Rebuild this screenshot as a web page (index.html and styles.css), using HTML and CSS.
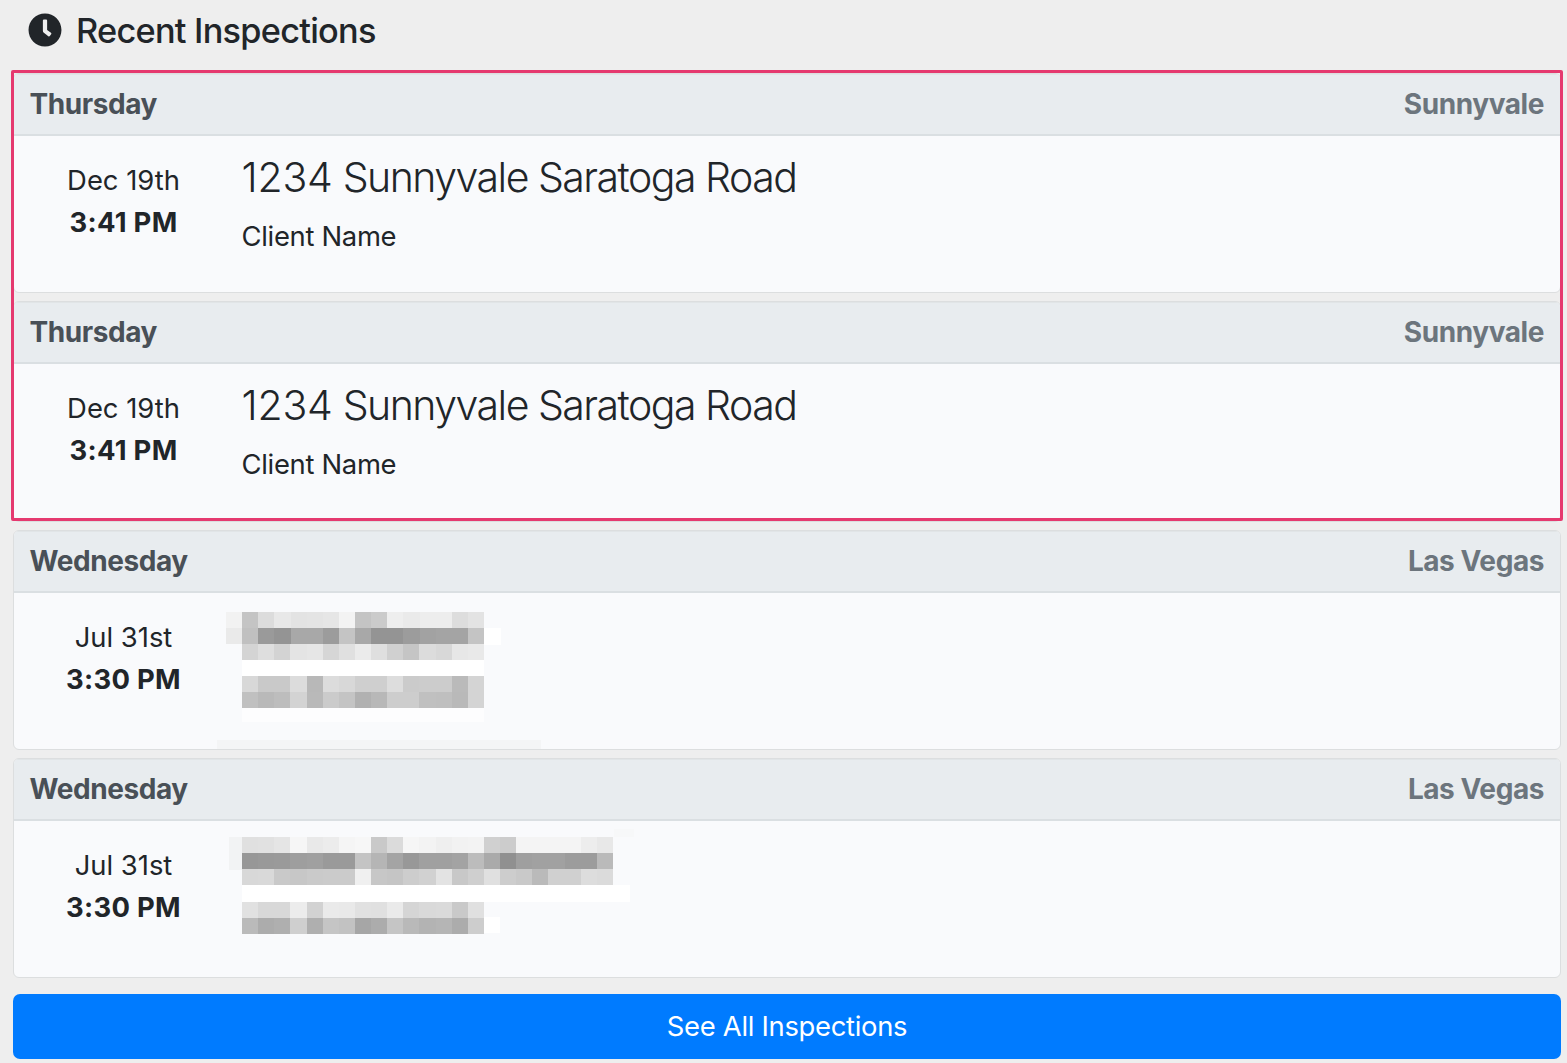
FILE: index.html
```html
<!DOCTYPE html>
<html lang="en">
<head>
<meta charset="utf-8">
<title>Recent Inspections</title>
<link rel="stylesheet" href="styles.css">
</head>
<body>
<main class="panel">
  <h1 class="heading">
    <svg class="clock" viewBox="0 0 512 512" aria-hidden="true"><path fill="currentColor" d="M256 8C119 8 8 119 8 256s111 248 248 248 248-111 248-248S393 8 256 8zm92.5 313l-20 25a16 16 0 0 1-22.500 2.500l-67-49.700a40 40 0 0 1-15-31.200V112a16 16 0 0 1 16-16h32a16 16 0 0 1 16 16v144l58 42.500a16 16 0 0 1 2.500 22.500z"/></svg>
    <span class="heading-text">Recent Inspections</span>
  </h1>
  <section class="highlighted">
    <article class="card">
      <header class="card-header"><span class="day">Thursday</span><span class="city">Sunnyvale</span></header>
      <div class="card-body">
        <div class="when"><span class="date">Dec 19th</span><b class="time">3:41 PM</b></div>
        <div class="info"><h2 class="address"><span class="number">1234</span> Sunnyvale Saratoga Road</h2><p class="client">Client Name</p></div>
      </div>
    </article>
    <article class="card">
      <header class="card-header"><span class="day">Thursday</span><span class="city">Sunnyvale</span></header>
      <div class="card-body">
        <div class="when"><span class="date">Dec 19th</span><b class="time">3:41 PM</b></div>
        <div class="info"><h2 class="address"><span class="number">1234</span> Sunnyvale Saratoga Road</h2><p class="client">Client Name</p></div>
      </div>
    </article>
  </section>
  <article class="card">
    <header class="card-header"><span class="day">Wednesday</span><span class="city">Las Vegas</span></header>
    <div class="card-body">
      <div class="when"><span class="date">Jul 31st</span><b class="time">3:30 PM</b></div>
      <svg class="redacted" data-mosaic="short" width="340" height="157" aria-hidden="true"></svg>
    </div>
  </article>
  <article class="card">
    <header class="card-header"><span class="day">Wednesday</span><span class="city">Las Vegas</span></header>
    <div class="card-body">
      <div class="when"><span class="date">Jul 31st</span><b class="time">3:30 PM</b></div>
      <svg class="redacted" data-mosaic="long" width="430" height="157" aria-hidden="true"></svg>
    </div>
  </article>
  <a class="see-all"><span>See All Inspections</span></a>
</main>
<script src="mosaic.js"></script>
</body>
</html>
```

FILE: styles.css
```css
* { box-sizing: border-box; }
body {
  margin: 0;
  background: #eee;
  color: #212529;
  font: 400 27.4px/42px Inter, "Liberation Sans", sans-serif;
}
h1, h2, p { margin: 0; }
.panel { padding: 0 6px 0 13px; }
.heading {
  display: flex;
  align-items: center;
  height: 73px;
  padding: 0 0 13px 15px;
  gap: 14px;
  font-size: 34.3px;
  font-weight: 500;
  line-height: 42px;
}
.heading-text { padding-top: 2px; letter-spacing: -0.74px; }
.clock { width: 34px; height: 34px; }
.highlighted { position: relative; }
.highlighted::after {
  content: "";
  position: absolute;
  inset: -3px -2px 1px;
  border: 3px solid #e5396f;
  border-radius: 2px;
}
.card {
  height: 220.35px;
  margin-bottom: 8px;
  border: 1px solid #dcdedf;
  border-radius: 6px;
  background: #f9fafc;
  overflow: hidden;
}
.card-header {
  display: flex;
  justify-content: space-between;
  height: 62px;
  padding: 8px 16px 10px 15.5px;
  border-top: 1px solid #e1e5e7;
  border-bottom: 2px solid #dadfe2;
  background: #e8ecef;
  font-size: 28px;
  font-weight: 700;
}
.day { color: #495057; letter-spacing: -0.42px; }
.city { color: #6c757d; letter-spacing: -0.42px; }
.card-body { display: flex; padding-left: 16px; }
.when {
  display: flex;
  flex-direction: column;
  align-items: center;
  width: 187px;
  padding-top: 23px;
}
.time { font-weight: 700; letter-spacing: 0.3px; }
.info { padding: 16px 0 0 24.5px; }
.address { font-size: 41px; font-weight: 350; line-height: 50px; letter-spacing: -1.5px; }
.number { letter-spacing: -0.2px; }
.client { margin-top: 13px; letter-spacing: -0.3px; }
.redacted { display: block; }
.see-all {
  display: flex;
  align-items: center;
  justify-content: center;
  height: 65px;
  margin-top: 15.4px;
  border-radius: 7px;
  background: #007bff;
  color: #fff;
}
.see-all span { letter-spacing: -0.3px; }
```

FILE: mosaic.js
```js
// Each row: x and y offset, then grey levels of consecutive cells.
const SIZE = 16.13;
const mosaics = {
  short: {
    glow: [[25, 67, 242, 17, "#fff"], [267, 35, 17, 17, "#fff"], [25, 115, 242, 14, "#fdfdfe"], [0, 147, 324, 9, "#f4f5f6"]],
    rows: [
      [9, 19, "f2 c4 dc e8 e3 e4 e6 f3 c4 cb ee ea ed ed dd e3"],
      [9, 35, "ea c0 9a 94 a8 a8 9c c4 a8 94 94 9c a2 a4 a4 c4"],
      [25, 51, "d4 de d3 e4 e6 d6 e0 eb df d0 c5 dc d8 e7 e9"],
      [25, 83, "d8 c9 c9 dc b8 dc d8 cf cf dd cb cc cc ba d4"],
      [25, 99, "c0 b9 bd d3 b9 cb c4 b1 b8 cd cd c0 bf b9 d4"]
    ]
  },
  long: {
    glow: [[25, 64, 388, 17, "#fff"], [12, 16, 13, 33, "#f2f3f4"], [267, 96, 16, 16, "#fff"], [397, 8, 20, 8, "#f7f8f9"]],
    rows: [
      [25, 16, "e0 e1 e5 f6 e9 ec f5 f7 c9 db f6 f3 ef f2 f3 d0 cc f4 f4 f4 f4 ed e8"],
      [25, 32, "97 99 9a 9e a0 9a 9a c4 b5 a4 98 a0 a0 a3 bc aa 90 9f a1 a1 9c 9c ba"],
      [25, 48, "d8 d9 c9 c7 ca cb cb f0 c7 c5 cd d1 e3 c8 cf e0 cd c9 ba d0 d0 dd db"],
      [25, 81, "e1 d8 d8 ec d2 ea e9 e1 e0 ea d5 d9 da c9 e0"],
      [25, 97, "ba ac af cf af c5 c2 a6 ac c5 b9 b3 b5 ac cd"]
    ]
  }
};

function addRect(svg, x, y, w, h, fill) {
  const rect = document.createElementNS("http://www.w3.org/2000/svg", "rect");
  const attrs = { x, y, width: w, height: h, fill };
  for (const name in attrs) rect.setAttribute(name, attrs[name]);
  svg.appendChild(rect);
}

document.querySelectorAll("[data-mosaic]").forEach(svg => {
  const { glow, rows } = mosaics[svg.dataset.mosaic];
  svg.setAttribute("shape-rendering", "crispEdges");
  glow.forEach(r => addRect(svg, ...r));
  rows.forEach(([x, y, cells]) => cells.split(" ").forEach((g, i) =>
    addRect(svg, x + i * SIZE, y, SIZE + 0.1, SIZE, "#" + g + g + g)));
});
```
